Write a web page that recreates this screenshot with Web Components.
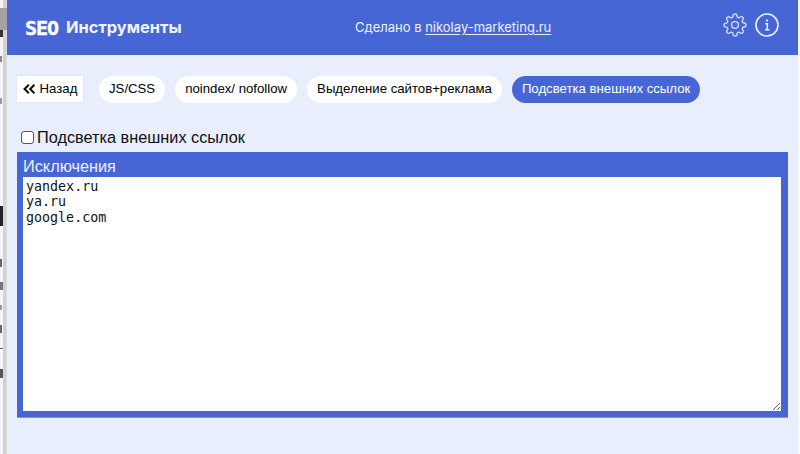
<!DOCTYPE html>
<html lang="ru"><head><meta charset="utf-8"><style>
html,body{margin:0;padding:0;height:454px;overflow:hidden;background:#f7f8fb}
body{display:flex;font-family:"Liberation Sans",Arial,sans-serif}
</style></head><body>
<page-edge></page-edge>
<seo-panel>
  <seo-header></seo-header>
  <seo-tabs>
    <back-button>Назад</back-button>
    <seo-tab>JS/CSS</seo-tab>
    <seo-tab>noindex/ nofollow</seo-tab>
    <seo-tab>Выделение сайтов+реклама</seo-tab>
    <seo-tab active>Подсветка внешних ссылок</seo-tab>
  </seo-tabs>
  <seo-check>Подсветка внешних ссылок</seo-check>
  <seo-exclusions label="Исключения">yandex.ru
ya.ru
google.com</seo-exclusions>
</seo-panel>
<script>
function def(name, html, init){
  customElements.define(name, class extends HTMLElement{
    constructor(){super();this.attachShadow({mode:'open'}).innerHTML=html;}
    connectedCallback(){ if(init) init(this); }
  });
}
def('page-edge',`<style>
:host{display:block;flex:0 0 7px;height:454px;position:relative;background:linear-gradient(90deg,#f5f5f5 0 2.5px,#d2d2d2 3px 6px,#e4e4e4 7px);overflow:hidden}
i{position:absolute;left:0;background:#3c3c3c}
</style>
<i style="top:8px;width:7px;height:22px;background:#a4a4a4"></i>
<i style="top:30px;width:2.5px;height:7px;background:#333"></i>
<i style="top:56px;width:2px;height:6px;background:#888"></i>
<i style="top:98px;width:2px;height:6px;background:#999"></i>
<i style="top:206px;width:2.5px;height:20px;background:#222"></i>
<i style="top:259px;width:2px;height:8px;background:#666"></i>
<i style="top:282px;width:3px;height:8px;background:#777"></i>
<i style="top:305px;width:2px;height:5px;background:#999"></i>
<i style="top:325px;width:2px;height:8px;background:#666"></i>
<i style="top:348px;width:3px;height:1px;background:#666"></i>
<i style="top:369px;width:3px;height:9px;background:#555"></i>`);
def('seo-panel',`<style>
:host{display:flex;flex-direction:column;width:791px;height:454px;background:#e8eefc;color:#000}
</style><slot></slot>`);
def('seo-header',`<style>
:host{display:flex;align-items:center;height:55px;flex:none;background:#4766d6;color:#fff;box-sizing:border-box;padding:0 18px 0 18px}
.logo{display:flex;align-items:center;gap:8px;width:330px;flex:none}
.seo{font:700 20px/1 "DejaVu Sans Mono","Liberation Mono",monospace;letter-spacing:-1px;width:33px;white-space:nowrap;-webkit-text-stroke:.4px #fff}
.name{font:700 16.4px/1 Inter,"Liberation Sans",sans-serif;color:#f0f3fd}
.made{font:400 13px/1 Inter,"Liberation Sans",sans-serif;color:#eef1fc;flex:1;white-space:nowrap}
.made a{color:inherit;text-decoration:underline;text-underline-offset:2px}
.icons{display:flex;align-items:center;gap:8px;margin:0 1px 6px 0}
svg{display:block}
</style>
<div class="logo"><span class="seo">SEO</span><span class="name">Инструменты</span></div>
<div class="made">Сделано в <a href="#">nikolay-marketing.ru</a></div>
<div class="icons">
<svg width="24" height="24" viewBox="0 0 24 24" fill="none" stroke="#d3dbf5" stroke-width="1.4" stroke-linejoin="round" stroke-linecap="round"><circle cx="12" cy="12" r="3.4"/><path d="M19.4 15a1.65 1.65 0 0 0 .33 1.82l.06.06a2 2 0 0 1 0 2.83 2 2 0 0 1-2.83 0l-.06-.06a1.65 1.65 0 0 0-1.82-.33 1.65 1.65 0 0 0-1 1.51V21a2 2 0 0 1-2 2 2 2 0 0 1-2-2v-.09A1.65 1.65 0 0 0 9 19.4a1.65 1.65 0 0 0-1.82.33l-.06.06a2 2 0 0 1-2.83 0 2 2 0 0 1 0-2.83l.06-.06a1.65 1.65 0 0 0 .33-1.82 1.65 1.65 0 0 0-1.51-1H3a2 2 0 0 1-2-2 2 2 0 0 1 2-2h.09A1.65 1.65 0 0 0 4.6 9a1.65 1.65 0 0 0-.33-1.82l-.06-.06a2 2 0 0 1 0-2.83 2 2 0 0 1 2.83 0l.06.06a1.65 1.65 0 0 0 1.82.33H9a1.65 1.65 0 0 0 1-1.51V3a2 2 0 0 1 2-2 2 2 0 0 1 2 2v.09a1.65 1.65 0 0 0 1 1.51 1.65 1.65 0 0 0 1.82-.33l.06-.06a2 2 0 0 1 2.83 0 2 2 0 0 1 0 2.83l-.06.06a1.65 1.65 0 0 0-.33 1.82V9a1.65 1.65 0 0 0 1.51 1H21a2 2 0 0 1 2 2 2 2 0 0 1-2 2h-.09a1.65 1.65 0 0 0-1.51 1z"/></svg>
<svg width="24" height="24" viewBox="0 0 24 24" fill="none" stroke="#f2f4fd" stroke-width="1.6"><circle cx="12" cy="12" r="11"/><path d="M10.2 10.8h2.1v5.8M10 16.7h4.4" stroke-width="1.5"/><circle cx="12" cy="7.6" r="1.1" fill="#f2f4fd" stroke="none"/></svg>
</div>`);
def('seo-tabs',`<style>
:host{display:flex;align-items:center;gap:10px;margin:20px 0 0 10px;height:28px;flex:none}
</style><slot></slot>`);
def('back-button',`<style>
:host{display:flex;align-items:center;gap:4px;box-sizing:border-box;height:26px;width:66px;justify-content:center;background:#fff;box-shadow:0 0 2px #d5dcee;font:13.2px/1 "Liberation Sans",sans-serif;margin-right:6px}
svg{display:block}
</style><svg width="13" height="10" viewBox="0 0 13 10" fill="none" stroke="#111" stroke-width="2.1"><path d="M5.8 .8 1.6 5l4.2 4.2M11.4 .8 7.2 5l4.2 4.2"/></svg><slot></slot>`);
def('seo-tab',`<style>
:host{display:flex;align-items:center;box-sizing:border-box;height:27px;padding:0 10px;border-radius:14px;background:#fff;color:#000;font:13.2px/1 "Liberation Sans",sans-serif;white-space:nowrap}
:host([active]){background:#4766d6;color:#fff}
</style><slot></slot>`);
def('seo-check',`<style>
:host{display:flex;align-items:center;margin:24px 0 0 14px;height:20px;flex:none;font:16.3px/20px "Liberation Sans",sans-serif;color:#111}
.box{box-sizing:border-box;width:13px;height:13px;border:1px solid #555;border-radius:3px;background:#fff;margin:0 3px 0 0;appearance:none;flex:none}
</style><input class="box" type="checkbox"><slot></slot>`);
def('seo-exclusions',`<style>
:host{display:flex;flex-direction:column;box-sizing:border-box;width:771px;height:265px;margin:5px 0 0 10px;background:#4766d6;padding:5px 7px 6px 6px;flex:none;box-shadow:0 1px 0 #8d99c4}
label{font:16.3px/18px "Liberation Sans",sans-serif;color:#eef1fc;height:20px;flex:none}
textarea{display:block;flex:1;box-sizing:border-box;width:100%;margin:0;border:0;outline:0;padding:2px 3px;background:#fff;color:#111;font:13.33px/15.4px "DejaVu Sans Mono","Liberation Mono",monospace;resize:both}
</style><label></label><textarea spellcheck="false"></textarea>`,el=>{
  el.shadowRoot.querySelector('label').textContent=el.getAttribute('label');
  el.shadowRoot.querySelector('textarea').value=el.textContent;
});
</script>
</body></html>
